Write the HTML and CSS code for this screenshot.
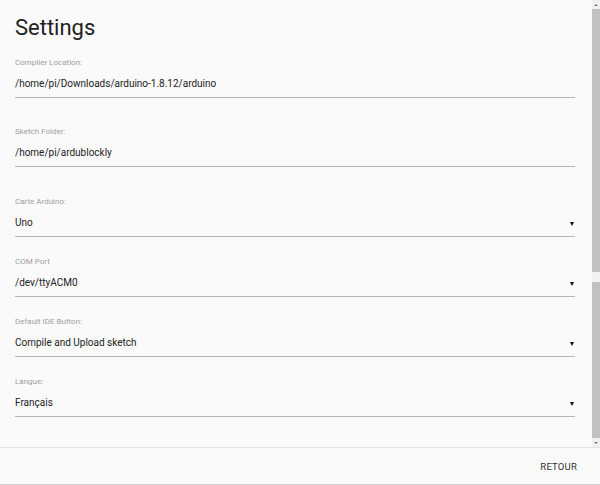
FILE: index.html
```html
<!DOCTYPE html>
<html>
<head>
<meta charset="utf-8">
<link rel="stylesheet" href="styles.css">
</head>
<body>
<div class="app">
  <div class="scroll">
    <div class="content">
      <h1 class="title">Settings</h1>
      <div class="field text">
        <div class="label">Compiler Location:</div>
        <div class="value">/home/pi/Downloads/arduino-1.8.12/arduino</div>
      </div>
      <div class="field text second">
        <div class="label">Sketch Folder:</div>
        <div class="value">/home/pi/ardublockly</div>
      </div>
      <div class="field select">
        <div class="label">Carte Arduino:</div>
        <div class="value"><span>Uno</span><i class="arrow"></i></div>
      </div>
      <div class="field select">
        <div class="label">COM Port</div>
        <div class="value"><span>/dev/ttyACM0</span><i class="arrow"></i></div>
      </div>
      <div class="field select">
        <div class="label">Default IDE Button:</div>
        <div class="value"><span>Compile and Upload sketch</span><i class="arrow"></i></div>
      </div>
      <div class="field select">
        <div class="label">Langue:</div>
        <div class="value"><span>Français</span><i class="arrow"></i></div>
      </div>
    </div>
    <div class="scrollbar">
      <div class="sb-btn up"></div>
      <div class="sb-thumb"></div>
      <div class="sb-gap"></div>
      <div class="sb-track"></div>
      <div class="sb-btn down"></div>
    </div>
  </div>
  <div class="footer">
    <span class="btn">RETOUR</span>
  </div>
</div>
</body>
</html>
```
FILE: styles.css
```css
html, body {
  margin: 0;
  padding: 0;
  background: #fafafa;
  font-family: Roboto, "Liberation Sans", sans-serif;
}
.app {
  width: 600px;
  height: 485px;
  display: flex;
  flex-direction: column;
}
.scroll {
  height: 447px;
  display: flex;
  flex-direction: row;
}
.content {
  flex: 1;
  padding: 0 17px 0 15px;
}
.title {
  margin: 15px 0 16px 0;
  font-size: 22px;
  line-height: 26px;
  font-weight: 400;
  color: #212121;
}
.field .label {
  font-size: 8px;
  line-height: 12px;
  height: 12px;
  color: #9e9e9e;
  margin-bottom: 8px;
}
.field .value {
  font-size: 10px;
  line-height: 14px;
  height: 14px;
  color: #212121;
  padding-bottom: 6px;
  border-bottom: 1px solid #b5b5b5;
  display: flex;
  align-items: center;
  justify-content: space-between;
}
.field.text {
  margin-bottom: 28px;
}
.field.text.second {
  margin-bottom: 29px;
}
.field.select {
  margin-bottom: 19px;
}
.arrow {
  width: 0;
  height: 0;
  border-left: 2.5px solid transparent;
  border-right: 2.5px solid transparent;
  border-top: 4px solid #111;
  margin-right: 1px;
  margin-top: 2px;
}
.scrollbar {
  width: 8px;
  display: flex;
  flex-direction: column;
  background: #f0f0f0;
}
.sb-btn {
  height: 9px;
  display: flex;
  justify-content: center;
  align-items: center;
}
.sb-btn.up::after {
  content: "";
  border-left: 2px solid transparent;
  border-right: 2px solid transparent;
  border-bottom: 2px solid #777;
}
.sb-btn.down::after {
  content: "";
  border-left: 2px solid transparent;
  border-right: 2px solid transparent;
  border-top: 2px solid #777;
}
.sb-thumb {
  height: 263px;
  background: #c1c1c1;
}
.sb-gap {
  height: 10px;
  background: #f3f3f3;
}
.sb-track {
  flex: 1;
  background: #c1c1c1;
}
.footer {
  height: 36px;
  border-top: 1px solid #e3e3e3;
  border-bottom: 1px solid #cfcfcf;
  display: flex;
  align-items: center;
  justify-content: flex-end;
  padding-right: 23px;
}
.btn {
  font-size: 9.5px;
  color: #333;
  letter-spacing: 0.2px;
}
```
